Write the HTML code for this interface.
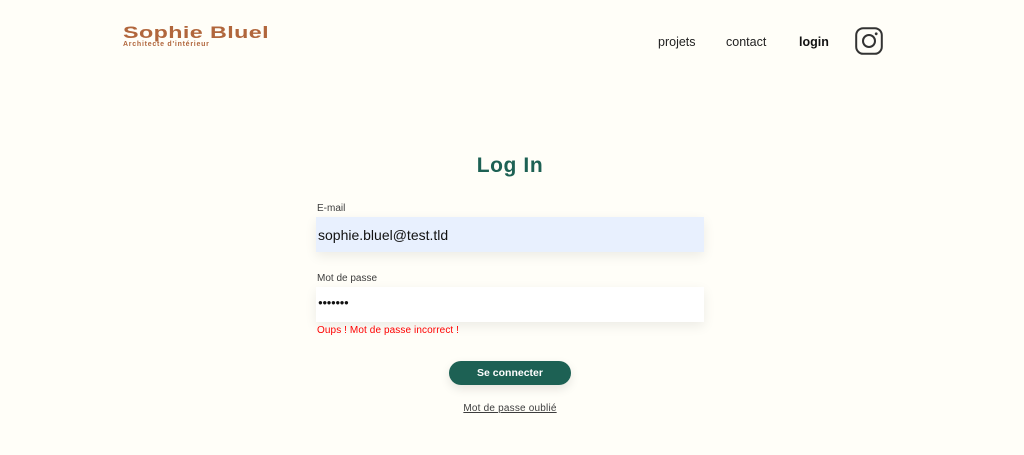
<!DOCTYPE html>
<html><head><meta charset="utf-8"><style>
*{margin:0;padding:0;box-sizing:border-box}
body{width:1024px;height:455px;background:#FFFEF8;font-family:"Liberation Sans",sans-serif;position:relative;overflow:hidden}
.a{position:absolute;white-space:nowrap}
.logo{left:123px;top:23px;color:#B1663C;font-weight:bold;font-size:17px;letter-spacing:0.3px;transform:scaleX(1.37);transform-origin:0 0}
.sub{left:123px;top:41px;color:#B1663C;font-size:7px;letter-spacing:0.75px;font-weight:bold}
.nav{top:35px;font-size:12.5px;color:#222}
h1{position:absolute;left:0;width:1020px;text-align:center;top:154px;font-size:21px;color:#1D6154;font-weight:bold;letter-spacing:0.6px}
.lbl{left:317px;font-size:10px;color:#3D3D3D}
.inp{position:absolute;left:316px;width:388px;height:35px;box-shadow:0 4px 12px rgba(0,0,0,0.08)}
.btn{position:absolute;left:449px;top:361px;width:122px;height:24px;border-radius:12px;background:#1D6154;color:#fff;font-weight:bold;font-size:10.5px;text-align:center;line-height:25px;box-shadow:0 4px 10px rgba(0,0,0,0.1)}
</style></head><body>
<div class="a logo">Sophie Bluel</div>
<div class="a sub">Architecte d'intérieur</div>
<div class="a nav" style="left:658px">projets</div>
<div class="a nav" style="left:726px">contact</div>
<div class="a nav" style="left:799px;font-weight:bold;color:#111">login</div>
<svg class="a" style="left:855px;top:27px" width="28" height="28" viewBox="0 0 28 28"><rect x="1.2" y="1.2" width="25.6" height="25.6" rx="7" fill="none" stroke="#333" stroke-width="2"/><circle cx="14" cy="14" r="6" fill="none" stroke="#333" stroke-width="2"/><circle cx="21.2" cy="6.8" r="1.4" fill="#333"/></svg>
<h1>Log In</h1>
<div class="a lbl" style="top:203px">E-mail</div>
<div class="inp" style="top:217px;background:#E8F0FE"><span class="a" style="left:2px;top:10px;font-size:14px;color:#111">sophie.bluel@test.tld</span></div>
<div class="a lbl" style="top:273px">Mot de passe</div>
<div class="inp" style="top:287px;background:#fff"><span class="a" style="left:2px;top:11px;font-size:8px;color:#111;letter-spacing:-0.5px">●●●●●●●</span></div>
<div class="a" style="left:317px;top:325px;font-size:10px;color:#f00;letter-spacing:0.1px">Oups ! Mot de passe incorrect !</div>
<div class="btn">Se connecter</div>
<div class="a" style="left:0;width:1020px;text-align:center;top:403px;font-size:10px;color:#3D3D3D;text-decoration:underline;letter-spacing:0.2px">Mot de passe oublié</div>
</body></html>
